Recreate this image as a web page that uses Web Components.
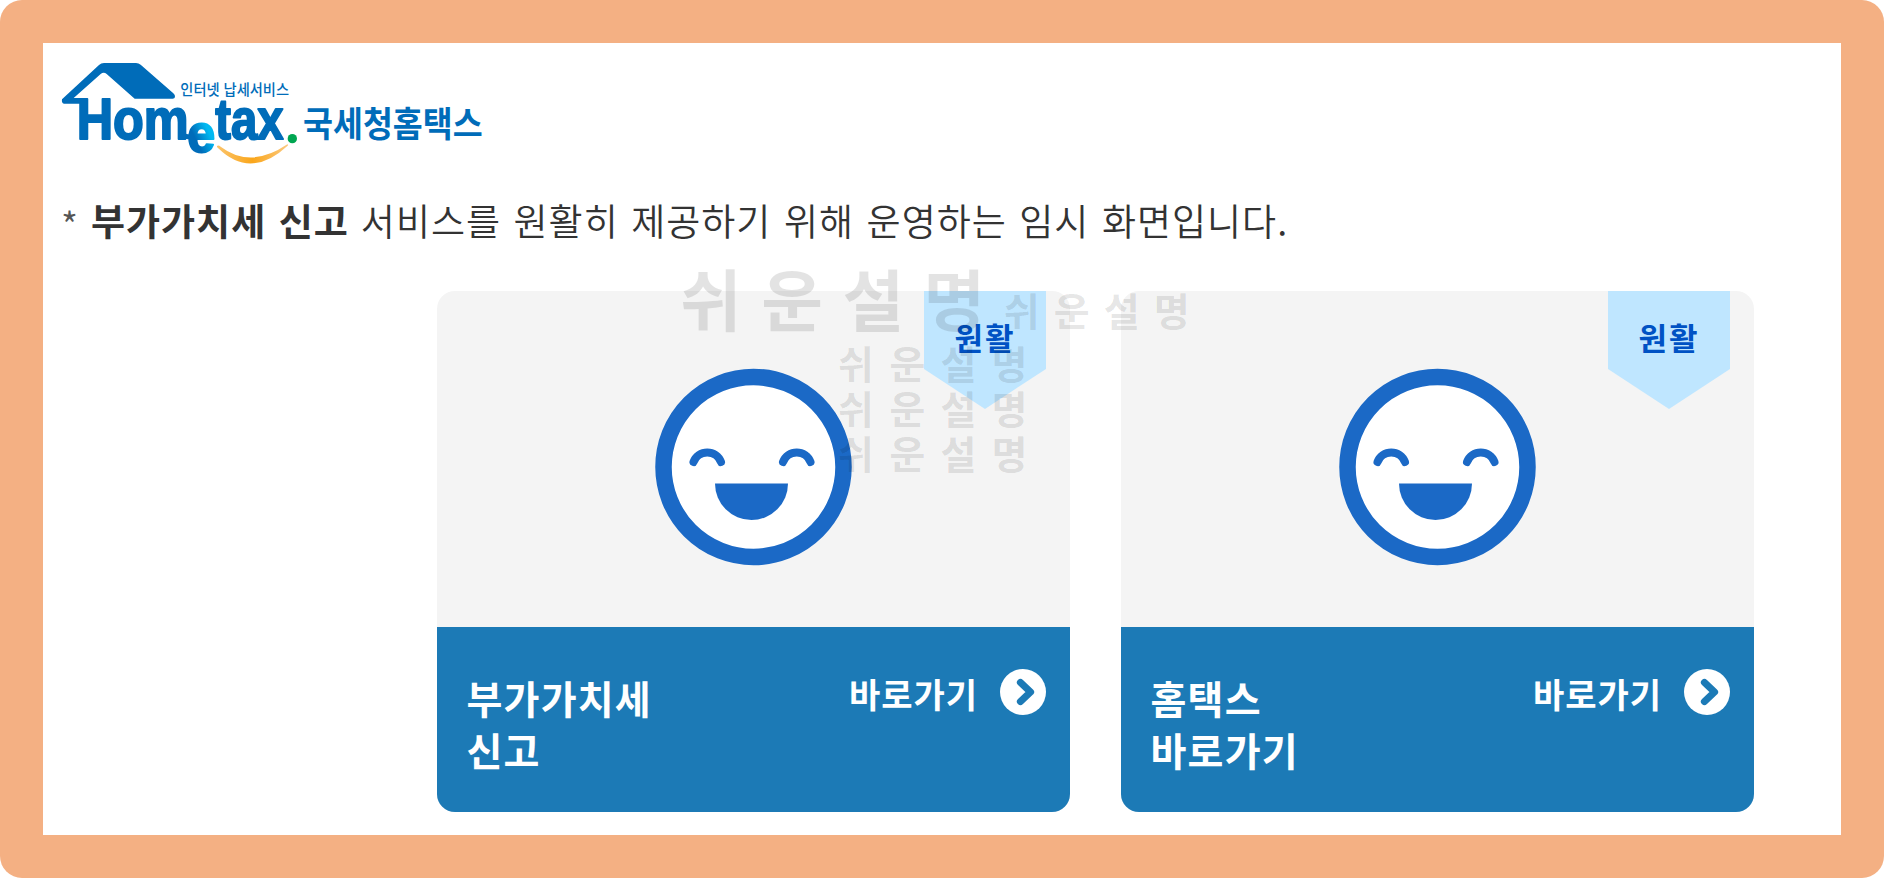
<!DOCTYPE html>
<html lang="ko">
<head>
<meta charset="UTF-8">
<title>국세청 홈택스</title>
<style>
  body {
    margin: 0;
    background: #fff;
    font-family: "Noto Sans CJK KR", sans-serif;
    color: #333;
  }
</style>
</head>
<body>
<page-frame>
  <hometax-logo></hometax-logo>
  <service-notice><b slot="service">부가가치세 신고</b>서비스를 원활히 제공하기 위해 운영하는 임시 화면입니다.</service-notice>
  <card-list>
    <service-card status="원활" action="바로가기">부가가치세<br>신고</service-card>
    <service-card status="원활" action="바로가기">홈택스<br>바로가기</service-card>
  </card-list>
  <water-mark slot="overlay"></water-mark>
</page-frame>

<script>
//orange frame around the whole page
class PageFrame extends HTMLElement {
  connectedCallback() {
    this.attachShadow({ mode: 'open' });
    this.shadowRoot.innerHTML = `
      <style>
        :host {
          display: block;
          position: relative;
          box-sizing: border-box;
          width: 1884px;
          height: 878px;
          border-radius: 22px;
          background: #f4b083;
          padding: 43px;
          overflow: hidden;
        }
        main {
          display: flex;
          flex-direction: column;
          box-sizing: border-box;
          height: 792px;
          padding: 17px 17px 0;
          background: #fff;
        }
      </style>
      <main><slot></slot></main>
      <slot name="overlay"></slot>
    `;
  }
}

class HometaxLogo extends HTMLElement {
  connectedCallback() {
    this.attachShadow({ mode: 'open' });
    this.shadowRoot.innerHTML = `
      <style>
        :host { display: block; height: 105px; }
        svg { display: block; }
        text { font-weight: 700; fill: #006cb9; }
        .en { font-family: "Liberation Sans", sans-serif; stroke: #006cb9; stroke-width: 6; stroke-linejoin: round; }
        .ko { font-family: "Noto Sans CJK KR", sans-serif; }
      </style>
      <svg width="460" height="105" viewBox="180 180 1380 315">
        <defs>
          <linearGradient id="e" x1="0" y1="1" x2="1" y2="0">
            <stop offset=".35" stop-color="#006cb9"/>
            <stop offset=".65" stop-color="#00b9f2"/>
          </linearGradient>
          <linearGradient id="smile">
            <stop offset="0" stop-color="#fbc46c"/>
            <stop offset=".5" stop-color="#faa61a"/>
            <stop offset="1" stop-color="#fbc980"/>
          </linearGradient>
        </defs>
        <path fill="#006cb9" d="M186 298 L297 195 Q303 189 312 189 L408 189 Q416 189 422 194 L520 280 Q526 285 525 291 Q524 296 518 296 L404 296 L320 222 Q311 214 302 222 L221 294 L258 294 L258 311 L192 311 Q184 310 186 298Z"/>
        <text class="en" x="230" y="416" font-size="170" textLength="336" lengthAdjust="spacingAndGlyphs">Hom</text>
        <path d="M548 398 Q550 412 574 411" fill="none" stroke="#006cb9" stroke-width="15"/>
        <text class="en" x="562" y="456" font-size="160" textLength="84" lengthAdjust="spacingAndGlyphs" style="fill: url(#e); stroke: url(#e)">e</text>
        <text class="en" x="646" y="416" font-size="170" textLength="205" lengthAdjust="spacingAndGlyphs">tax</text>
        <circle cx="877" cy="416" r="14" fill="#00a651"/>
        <path fill="url(#smile)" d="M651 438 Q655 434 662 440 Q752 508 862 433 Q866 433 863 437 Q752 540 654 444 Q650 441 651 438Z"/>
        <text class="ko" x="541" y="284" font-size="45" textLength="326" lengthAdjust="spacingAndGlyphs" style="font-weight: 500">인터넷 납세서비스</text>
        <text class="ko" x="909" y="410" font-size="106" textLength="539" lengthAdjust="spacingAndGlyphs">국세청홈택스</text>
      </svg>
    `;
  }
}

class ServiceNotice extends HTMLElement {
  connectedCallback() {
    this.attachShadow({ mode: 'open' });
    this.shadowRoot.innerHTML = `
      <style>
        :host {
          display: block;
          margin-top: 27px;
          padding-left: 2px;
          height: 58px;
          font-size: 37px;
          line-height: 56px;
          font-weight: 350;
          letter-spacing: 1px;
          word-spacing: 1.2px;
          white-space: nowrap;
        }
        .star {
          display: inline-block;
          width: 29px;
          line-height: 1;
          color: #555;
          transform: translate(-1px, 4px);
        }
        ::slotted(b) { font-weight: 700; margin-right: 12px; }
      </style>
      <span class="star">*</span><slot name="service"></slot><slot></slot>
    `;
  }
}

class CardList extends HTMLElement {
  connectedCallback() {
    this.attachShadow({ mode: 'open' });
    this.shadowRoot.innerHTML = `
      <style>
        :host {
          display: flex;
          gap: 51px;
          margin: 41px 0 0 376.5px;
        }
      </style>
      <slot></slot>
    `;
  }
}

//card: status face on top, title and link at the bottom
class ServiceCard extends HTMLElement {
  connectedCallback() {
    this.attachShadow({ mode: 'open' });
    this.shadowRoot.innerHTML = `
      <style>
        :host {
          display: block;
          position: relative;
          width: 633px;
          height: 520.5px;
          border-radius: 18px;
          overflow: hidden;
          background: #f4f4f4;
        }
        .face {
          display: flex;
          justify-content: center;
          box-sizing: border-box;
          height: 336px;
          padding: 77px 1px 0 0;
        }
        .status {
          position: absolute;
          top: 0;
          right: 23.5px;
          box-sizing: border-box;
          width: 122px;
          height: 118px;
          padding: 24px 0 0;
          background: #bfe6ff;
          clip-path: polygon(0 0, 100% 0, 100% 66%, 50% 100%, 0 66%);
          color: #0052c4;
          font-size: 31px;
          line-height: 44px;
          font-weight: 700;
          letter-spacing: 2px;
          text-align: center;
        }
        .bottom {
          display: flex;
          justify-content: space-between;
          align-items: flex-start;
          box-sizing: border-box;
          height: 185px;
          padding: 42px 23.5px 0 30px;
          background: #1c7ab6;
          color: #fff;
        }
        .title {
          margin-top: 3px;
          font-size: 39px;
          line-height: 51.5px;
          font-weight: 700;
          letter-spacing: 1.2px;
        }
        .link {
          display: flex;
          align-items: center;
          gap: 22px;
          height: 46px;
          font-size: 34px;
          font-weight: 700;
          letter-spacing: 1px;
          white-space: nowrap;
        }
        .link span { padding-top: 3px; }
      </style>
      <div class="face">
        <svg width="200" height="200" viewBox="0 0 200 200" fill="none" stroke="#1b69c6">
          <circle cx="100.500" cy="99" r="90" fill="#fff" stroke-width="16.5"/>
          <path d="M40.500 94 A14.700 14.700 0 0 1 68 94 M130 94 A14.700 14.700 0 0 1 157.500 94" stroke-width="8" stroke-linecap="round"/>
          <path d="M62 115.500 H135 A36.500 36.500 0 0 1 62 115.500Z" fill="#1b69c6" stroke="none"/>
        </svg>
      </div>
      <div class="status">${this.getAttribute('status')}</div>
      <div class="bottom">
        <div class="title"><slot></slot></div>
        <div class="link">
          <span>${this.getAttribute('action')}</span>
          <svg width="46" height="46" viewBox="0 0 46 46">
            <circle cx="23" cy="23" r="23" fill="#fff"/>
            <path d="M20.500 13.500 L30.500 23 L20.500 32.500" fill="none" stroke="#1c7ab6" stroke-width="7.200" stroke-linecap="round" stroke-linejoin="round"/>
          </svg>
        </div>
      </div>
    `;
  }
}

//grey watermark that lies over the cards
class WaterMark extends HTMLElement {
  connectedCallback() {
    this.attachShadow({ mode: 'open' });
    this.shadowRoot.innerHTML = `
      <style>
        :host {
          position: absolute;
          left: 680px;
          top: 249px;
          color: rgba(0, 0, 0, .11);
          font-weight: 700;
          white-space: nowrap;
          pointer-events: none;
        }
        .first { display: flex; align-items: baseline; gap: 18px; height: 91px; line-height: 95px; }
        .big { font-size: 67px; letter-spacing: .4px; }
        .small { font-size: 39px; letter-spacing: 1.6px; line-height: 45px; }
        .rows { padding-left: 158px; letter-spacing: 2.2px; }
      </style>
      <div class="first"><span class="big">쉬 운 설 명</span><span class="small">쉬 운 설 명</span></div>
      <div class="rows small" style="letter-spacing: 2.2px">
        <div>쉬 운 설 명</div>
        <div>쉬 운 설 명</div>
        <div>쉬 운 설 명</div>
      </div>
    `;
  }
}

customElements.define('page-frame', PageFrame);
customElements.define('hometax-logo', HometaxLogo);
customElements.define('service-notice', ServiceNotice);
customElements.define('card-list', CardList);
customElements.define('service-card', ServiceCard);
customElements.define('water-mark', WaterMark);
</script>
</body>
</html>
